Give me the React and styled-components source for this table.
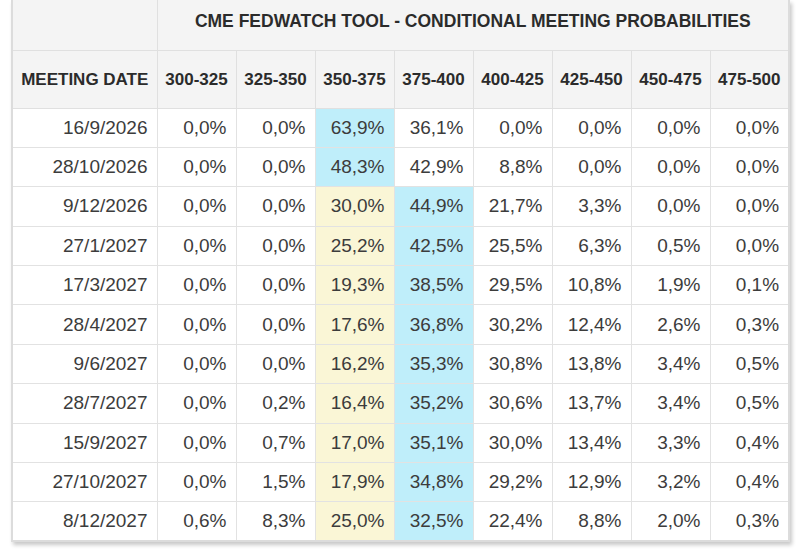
import React from 'react';
import styled, { createGlobalStyle } from 'styled-components';

const ranges = ['300-325', '325-350', '350-375', '375-400', '400-425', '425-450', '450-475', '475-500'];

// hl: column index -> 'blue' | 'yellow'
const meetings = [
    { date: '16/9/2026', values: ['0,0%', '0,0%', '63,9%', '36,1%', '0,0%', '0,0%', '0,0%', '0,0%'], hl: { 2: 'blue' } },
    { date: '28/10/2026', values: ['0,0%', '0,0%', '48,3%', '42,9%', '8,8%', '0,0%', '0,0%', '0,0%'], hl: { 2: 'blue' } },
    { date: '9/12/2026', values: ['0,0%', '0,0%', '30,0%', '44,9%', '21,7%', '3,3%', '0,0%', '0,0%'], hl: { 2: 'yellow', 3: 'blue' } },
    { date: '27/1/2027', values: ['0,0%', '0,0%', '25,2%', '42,5%', '25,5%', '6,3%', '0,5%', '0,0%'], hl: { 2: 'yellow', 3: 'blue' } },
    { date: '17/3/2027', values: ['0,0%', '0,0%', '19,3%', '38,5%', '29,5%', '10,8%', '1,9%', '0,1%'], hl: { 2: 'yellow', 3: 'blue' } },
    { date: '28/4/2027', values: ['0,0%', '0,0%', '17,6%', '36,8%', '30,2%', '12,4%', '2,6%', '0,3%'], hl: { 2: 'yellow', 3: 'blue' } },
    { date: '9/6/2027', values: ['0,0%', '0,0%', '16,2%', '35,3%', '30,8%', '13,8%', '3,4%', '0,5%'], hl: { 2: 'yellow', 3: 'blue' } },
    { date: '28/7/2027', values: ['0,0%', '0,2%', '16,4%', '35,2%', '30,6%', '13,7%', '3,4%', '0,5%'], hl: { 2: 'yellow', 3: 'blue' } },
    { date: '15/9/2027', values: ['0,0%', '0,7%', '17,0%', '35,1%', '30,0%', '13,4%', '3,3%', '0,4%'], hl: { 2: 'yellow', 3: 'blue' } },
    { date: '27/10/2027', values: ['0,0%', '1,5%', '17,9%', '34,8%', '29,2%', '12,9%', '3,2%', '0,4%'], hl: { 2: 'yellow', 3: 'blue' } },
    { date: '8/12/2027', values: ['0,6%', '8,3%', '25,0%', '32,5%', '22,4%', '8,8%', '2,0%', '0,3%'], hl: { 2: 'yellow', 3: 'blue' } },
];

const App = () => {
    return (
        <>
            <GlobalStyle />
            <Page>
                <Table>
                    <colgroup>
                        <col style={{ width: 145 }} />
                        {ranges.map(r => <col key={r} style={{ width: 79 }} />)}
                    </colgroup>
                    <thead>
                        <tr>
                            <TitleCell />
                            <TitleCell colSpan={8}>CME FEDWATCH TOOL - CONDITIONAL MEETING PROBABILITIES</TitleCell>
                        </tr>
                        <tr>
                            <HeadCell>MEETING DATE</HeadCell>
                            {ranges.map(r => <HeadCell key={r}>{r}</HeadCell>)}
                        </tr>
                    </thead>
                    <tbody>
                        {meetings.map(m => (
                            <tr key={m.date}>
                                <Cell>{m.date}</Cell>
                                {m.values.map((v, i) => (
                                    <Cell key={i} $tone={m.hl[i]}>{v}</Cell>
                                ))}
                            </tr>
                        ))}
                    </tbody>
                </Table>
            </Page>
        </>
    );
};

const GlobalStyle = createGlobalStyle`
    body {
        margin: 0;
        background: #ffffff;
        font-family: "Liberation Sans", Arial, sans-serif;
    }
`;

const Page = styled.div`
    width: 800px;
    height: 554px;
    overflow: hidden;
    padding: 0 12px 0 11px;
    box-sizing: border-box;
`;

const Table = styled.table`
    width: 777px;
    table-layout: fixed;
    border-collapse: collapse;
    background: #ffffff;
    box-shadow: 2px 3px 4px rgba(0, 0, 0, 0.22);
    border: 2px solid #dcdcdc;
    border-top: none;
`;

const TitleCell = styled.th`
    height: 50px;
    box-sizing: border-box;
    padding: 0 0 7px;
    background: #f4f4f4;
    border: 1px solid #e0e0e0;
    border-top: none;
    font-size: 17.5px;
    font-weight: bold;
    color: #2b2b2b;
    text-align: center;
    white-space: nowrap;
`;

const HeadCell = styled.th`
    height: 58px;
    box-sizing: border-box;
    padding: 1px 0 0;
    background: #f4f4f4;
    border: 1px solid #e0e0e0;
    font-size: 17px;
    font-weight: bold;
    color: #2b2b2b;
    text-align: center;
    white-space: nowrap;
`;

const tones = {
    blue: '#bfeefa',
    yellow: '#faf6d6',
};

const Cell = styled.td`
    height: 39.4px;
    padding: 0 9px 0 0;
    box-sizing: border-box;
    background: ${p => tones[p.$tone] || '#ffffff'};
    border: 1px solid #e2e2e2;
    font-size: 19px;
    color: #3c3c3c;
    text-align: right;
    white-space: nowrap;
`;

export default App;
